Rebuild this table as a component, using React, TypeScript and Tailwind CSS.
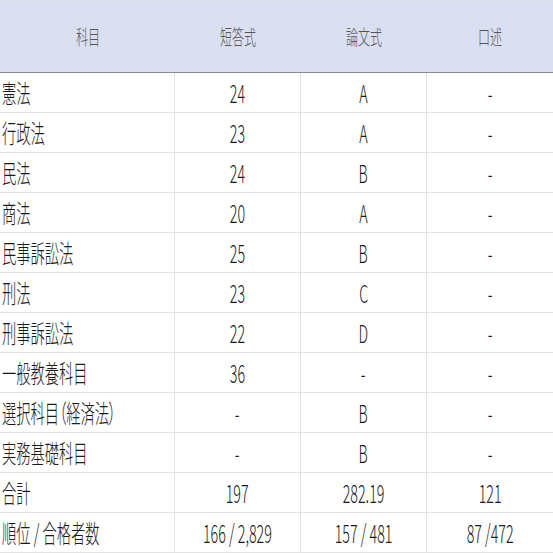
import React from "react";

const rows: [string, string, string, string][] = [
  ["憲法", "24", "A", "-"],
  ["行政法", "23", "A", "-"],
  ["民法", "24", "B", "-"],
  ["商法", "20", "A", "-"],
  ["民事訴訟法", "25", "B", "-"],
  ["刑法", "23", "C", "-"],
  ["刑事訴訟法", "22", "D", "-"],
  ["一般教養科目", "36", "-", "-"],
  ["選択科目（経済法）", "-", "B", "-"],
  ["実務基礎科目", "-", "B", "-"],
  ["合計", "197", "282.19", "121"],
  ["順位 / 合格者数", "166 / 2,829", "157 / 481", "87 /472"],
];

const font = { fontFamily: '"Noto Sans CJK JP", "Noto Sans", sans-serif' };

export default function App() {
  return (
    <div className="w-[553px] h-[553px] bg-white overflow-hidden" style={font}>
      <div className="grid grid-cols-[175px_126px_126px_126px] h-[73px] bg-[#dae0f2] border-t border-[#e2e2e6] border-b border-b-[#8a8a8a] text-[20px] font-light text-[#555]">
        {["科目", "短答式", "論文式", "口述"].map((h) => (
          <div key={h} className="flex items-center justify-center">
            <span className="inline-block scale-x-[0.6] whitespace-nowrap leading-none">{h}</span>
          </div>
        ))}
      </div>
      {rows.map((r, i) => (
        <div
          key={i}
          className="grid grid-cols-[175px_126px_126px_126px] h-[40px] border-b border-[#e3e3e3] text-[25px] font-light text-[#1a1a1a]"
        >
          <div className="flex items-center border-r border-[#e3e3e3] pl-[2px] overflow-visible">
            <span className="inline-block origin-left scale-x-[0.57] whitespace-nowrap leading-none [font-feature-settings:'palt']">{r[0]}</span>
          </div>
          <div className="flex items-center justify-center border-r border-[#e3e3e3]">
            <span className="inline-block scale-x-[0.57] whitespace-nowrap leading-none">{r[1]}</span>
          </div>
          <div className="flex items-center justify-center border-r border-[#e3e3e3]">
            <span className="inline-block scale-x-[0.57] whitespace-nowrap leading-none">{r[2]}</span>
          </div>
          <div className="flex items-center justify-center">
            <span className="inline-block scale-x-[0.57] whitespace-nowrap leading-none">{r[3]}</span>
          </div>
        </div>
      ))}
    </div>
  );
}
